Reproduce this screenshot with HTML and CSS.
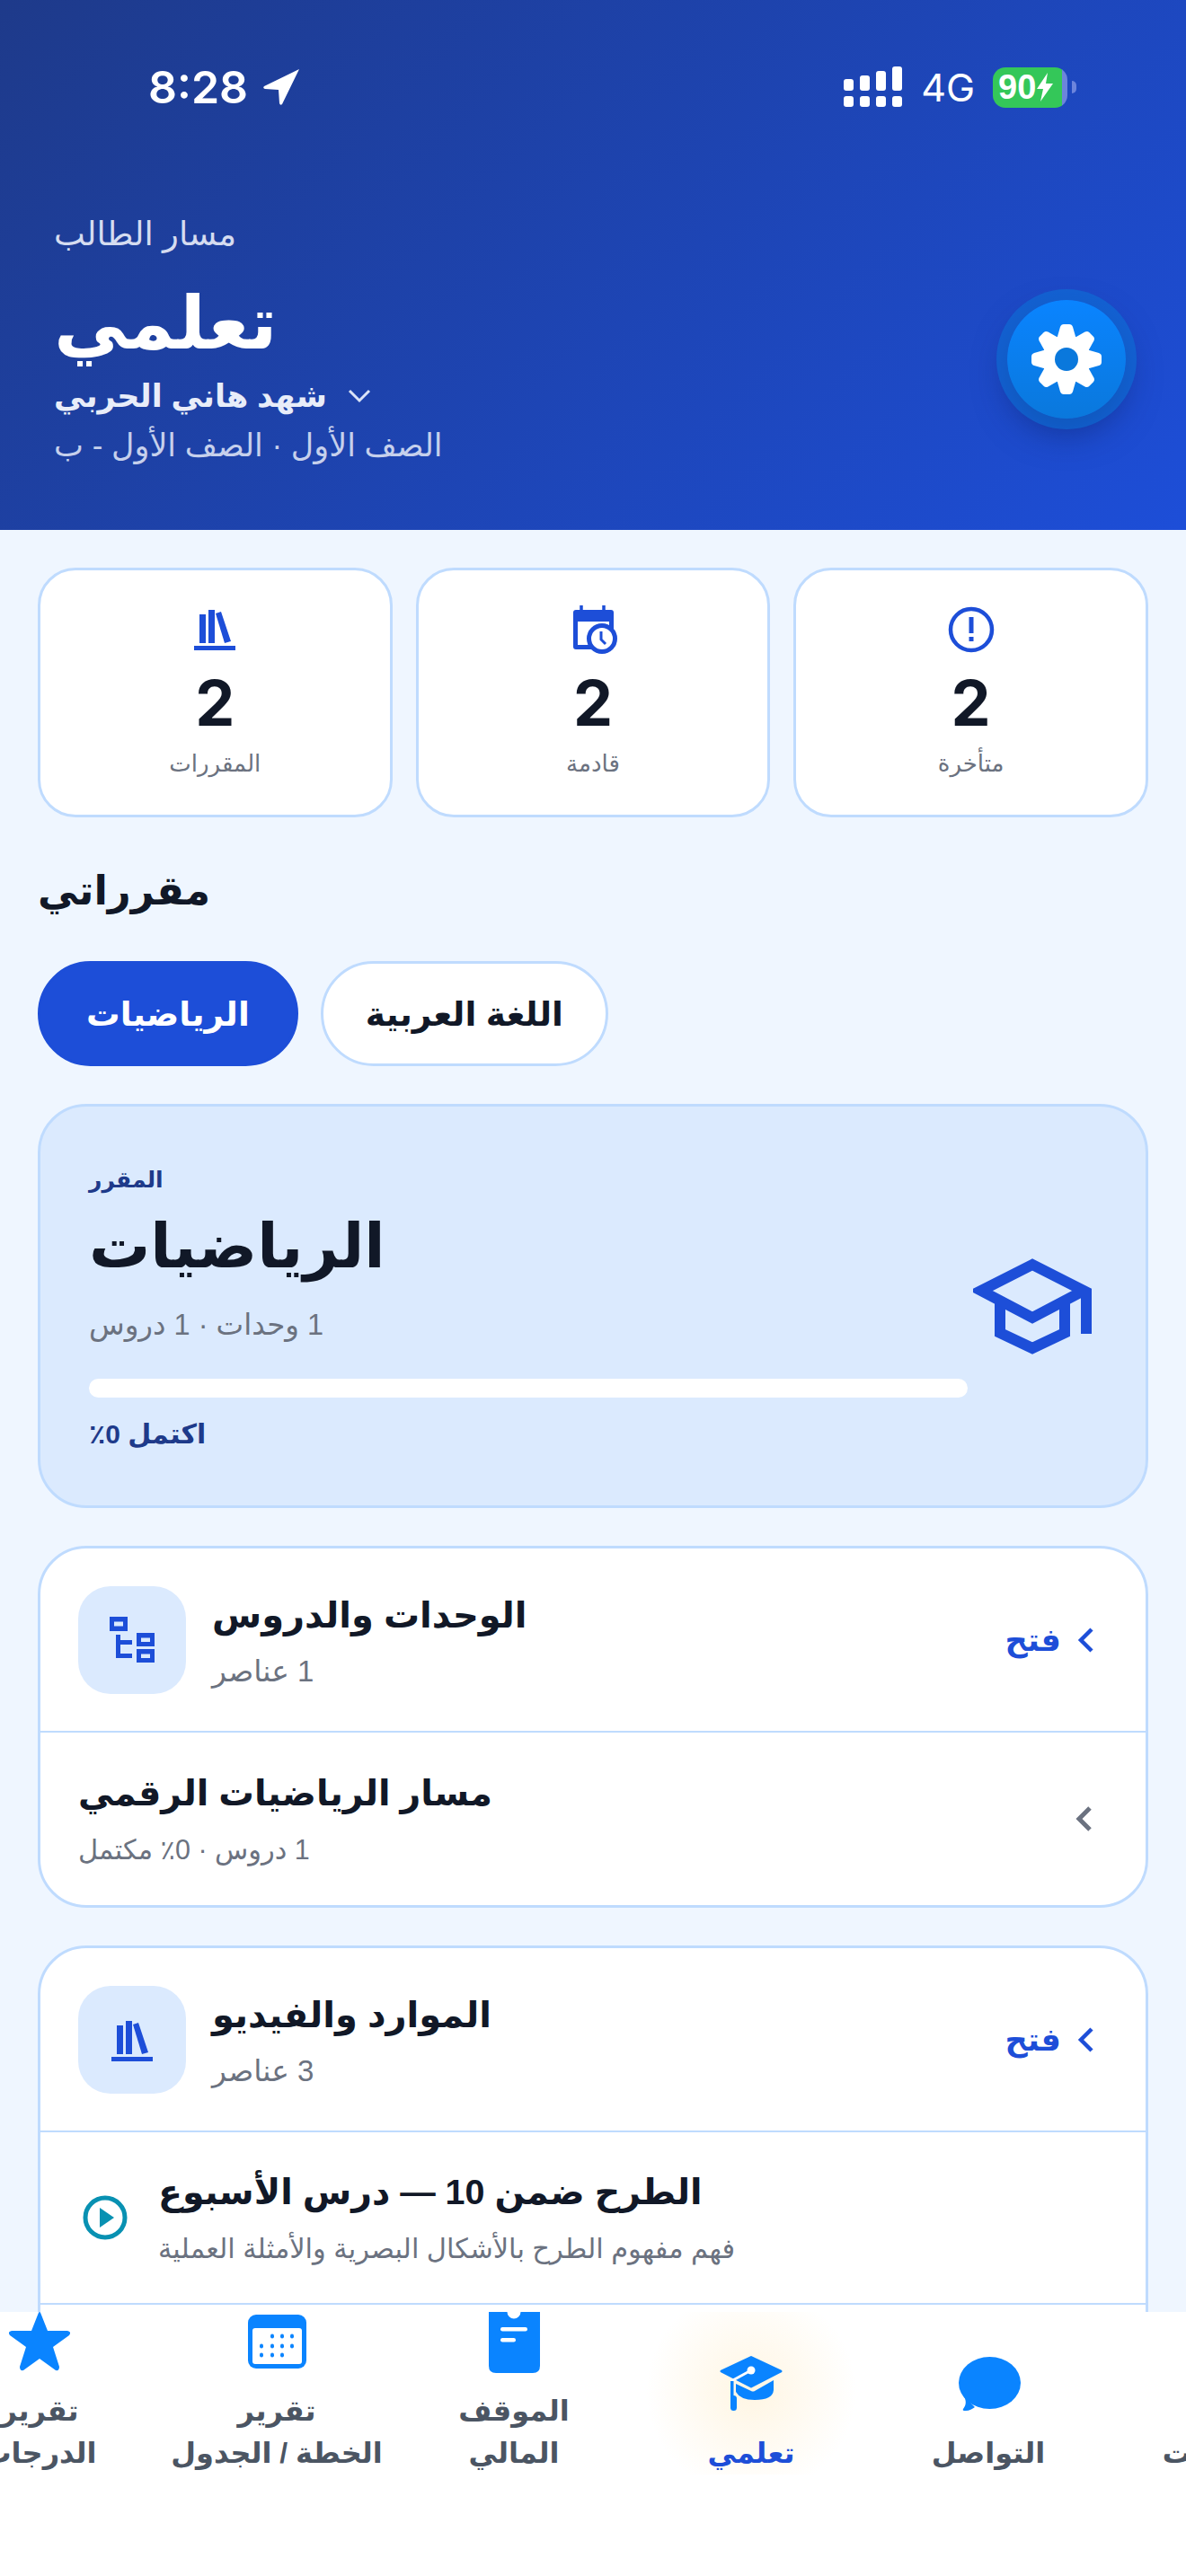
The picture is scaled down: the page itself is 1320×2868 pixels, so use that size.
FILE: index.html
```html
<!DOCTYPE html>
<html lang="ar">
<head>
    <meta charset="UTF-8">
    <meta name="viewport" content="width=device-width, initial-scale=1.0">
    <title>تعلمي</title>
    <link rel="stylesheet" href="styles.css">
</head>
<body>
    <div class="app">
        <header class="hero">
            <div class="status">
                <div class="status-left">
                    <span class="clock">8:28</span>
                    <svg class="loc" viewBox="0 0 42 42"><path d="M41 1 2 20q-2 2 1 3l15 1 1 15q1 3 3 1z" fill="#fff"/></svg>
                </div>
                <div class="status-right">
                    <svg class="signal" viewBox="0 0 66 46" fill="#fff">
                        <rect x="0" y="14" width="11" height="13" rx="3"/><rect x="18" y="10" width="11" height="17" rx="3"/><rect x="36" y="5" width="11" height="22" rx="3"/><rect x="54" y="0" width="11" height="27" rx="3"/>
                        <rect x="0" y="33" width="11" height="12" rx="3"/><rect x="18" y="33" width="11" height="12" rx="3"/><rect x="36" y="33" width="11" height="12" rx="3"/><rect x="54" y="33" width="11" height="12" rx="3"/>
                    </svg>
                    <span class="net">4G</span>
                    <div class="battery">
                        <div class="battery-body"><span>90</span><svg class="bolt" viewBox="0 0 20 32"><path d="M13 0 1 18h7l-3 14L19 12h-8z" fill="#fff"/></svg></div>
                        <i class="battery-cap"></i>
                    </div>
                </div>
            </div>
            <div class="hero-main">
                <div class="hero-text">
                    <div class="eyebrow" dir="rtl">مسار الطالب</div>
                    <h1 class="hero-title" dir="rtl">تعلمي</h1>
                    <div class="student">
                        <span dir="rtl">شهد هاني الحربي</span>
                        <svg class="caret" viewBox="0 0 26 16"><path d="M2 2l11 11L24 2" fill="none" stroke="#dbe4f7" stroke-width="3"/></svg>
                    </div>
                    <div class="class-line" dir="rtl">الصف الأول · الصف الأول - ب</div>
                </div>
                <button class="gear-btn">
                    <svg viewBox="-40 -40 80 80" class="gear">
                        <g fill="#fff">
                            <circle r="27"/>
                            <path d="M-11-22-7-36Q-6-39-3-39H3Q6-39 7-36L11-22z"/>
                            <path transform="rotate(45)" d="M-11-22-7-36Q-6-39-3-39H3Q6-39 7-36L11-22z"/>
                            <path transform="rotate(90)" d="M-11-22-7-36Q-6-39-3-39H3Q6-39 7-36L11-22z"/>
                            <path transform="rotate(135)" d="M-11-22-7-36Q-6-39-3-39H3Q6-39 7-36L11-22z"/>
                            <path transform="rotate(180)" d="M-11-22-7-36Q-6-39-3-39H3Q6-39 7-36L11-22z"/>
                            <path transform="rotate(225)" d="M-11-22-7-36Q-6-39-3-39H3Q6-39 7-36L11-22z"/>
                            <path transform="rotate(270)" d="M-11-22-7-36Q-6-39-3-39H3Q6-39 7-36L11-22z"/>
                            <path transform="rotate(315)" d="M-11-22-7-36Q-6-39-3-39H3Q6-39 7-36L11-22z"/>
                        </g>
                        <circle r="13" fill="#0a78dc"/>
                    </svg>
                </button>
            </div>
        </header>

        <main class="scroll">
            <section class="stats">
                <div class="stat">
                    <svg class="stat-icon" viewBox="0 0 56 56"><g fill="#1d4ed8"><rect x="11" y="12" width="7" height="32"/><rect x="21" y="7" width="7" height="37"/><path d="M29 11l6-2 11 33-7 2z"/><rect x="5" y="47" width="46" height="5"/></g></svg>
                    <div class="stat-num">2</div>
                    <div class="stat-label" dir="rtl">المقررات</div>
                </div>
                <div class="stat">
                    <svg class="stat-icon" viewBox="0 0 56 56"><path d="M15 2v6M40 2v6" fill="none" stroke="#1d4ed8" stroke-width="3.500"/><path d="M9 7h39a3 3 0 0 1 3 3v38a3 3 0 0 1-3 3H9a3 3 0 0 1-3-3V10a3 3 0 0 1 3-3zm2 13v26h35V20z" fill="#1d4ed8"/><circle cx="38" cy="39" r="14.500" fill="#fff" stroke="#1d4ed8" stroke-width="5"/><path d="M37 31v9l5 5" fill="none" stroke="#1d4ed8" stroke-width="3"/></svg>
                    <div class="stat-num">2</div>
                    <div class="stat-label" dir="rtl">قادمة</div>
                </div>
                <div class="stat">
                    <svg class="stat-icon" viewBox="0 0 56 56"><circle cx="28" cy="29" r="23" fill="none" stroke="#1d4ed8" stroke-width="4.500"/><rect x="25.500" y="15" width="5" height="18" fill="#1d4ed8"/><rect x="25.500" y="37" width="5" height="5" fill="#1d4ed8"/></svg>
                    <div class="stat-num">2</div>
                    <div class="stat-label" dir="rtl">متأخرة</div>
                </div>
            </section>

            <h2 class="section-title" dir="rtl">مقرراتي</h2>

            <div class="tabs">
                <div class="tab tab-active" dir="rtl">الرياضيات</div>
                <div class="tab" dir="rtl">اللغة العربية</div>
            </div>

            <section class="course">
                <div class="course-text">
                    <div class="course-eyebrow" dir="rtl">المقرر</div>
                    <div class="course-title" dir="rtl">الرياضيات</div>
                    <div class="course-sub" dir="rtl">1 وحدات · 1 دروس</div>
                    <div class="progress"></div>
                    <div class="course-done" dir="rtl">اكتمل 0٪</div>
                </div>
                <svg class="course-icon" viewBox="0 0 132 107" fill="none" stroke="#1d4ed8" stroke-width="12">
                    <path d="M66 7 9 36l57 30 57-30z"/>
                    <path d="M30 46v37l36 17 36-17V46"/>
                    <path d="M126 36v48"/>
                </svg>
            </section>

            <section class="panel">
                <div class="panel-head">
                    <div class="panel-icon">
                        <svg class="tree-icon" viewBox="0 0 50 51" fill="#1d4ed8" fill-rule="evenodd"><path d="M0 0h20v16H0zM5 5.500v5h10v-5z"/><path d="M30 18h20v15H30zM35 23.500v4.500h10v-4.500z"/><path d="M30 36h20v15H30zM35 41.500v4.500h10v-4.500z"/><path d="M7 20h5v6h13v5H12v10h13v5H7z"/></svg>
                    </div>
                    <div class="panel-text">
                        <div class="panel-title" dir="rtl">الوحدات والدروس</div>
                        <div class="panel-sub" dir="rtl">1 عناصر</div>
                    </div>
                    <div class="open-link">
                        <span dir="rtl">فتح</span>
                        <svg class="chev" viewBox="0 0 18 28"><path d="M16 2 4 14l12 12" fill="none" stroke="#1d4ed8" stroke-width="4.500"/></svg>
                    </div>
                </div>
                <div class="row">
                    <div class="row-text">
                        <div class="row-title" dir="rtl">مسار الرياضيات الرقمي</div>
                        <div class="row-sub" dir="rtl">1 دروس · 0٪ مكتمل</div>
                    </div>
                    <svg class="chev" viewBox="0 0 18 28"><path d="M16 2 4 14l12 12" fill="none" stroke="#6b7280" stroke-width="5"/></svg>
                </div>
            </section>

            <section class="panel">
                <div class="panel-head">
                    <div class="panel-icon">
                        <svg viewBox="0 0 56 56"><g fill="#1d4ed8"><rect x="11" y="12" width="7" height="32"/><rect x="21" y="7" width="7" height="37"/><path d="M29 11l6-2 11 33-7 2z"/><rect x="5" y="47" width="46" height="5"/></g></svg>
                    </div>
                    <div class="panel-text">
                        <div class="panel-title" dir="rtl">الموارد والفيديو</div>
                        <div class="panel-sub" dir="rtl">3 عناصر</div>
                    </div>
                    <div class="open-link">
                        <span dir="rtl">فتح</span>
                        <svg class="chev" viewBox="0 0 18 28"><path d="M16 2 4 14l12 12" fill="none" stroke="#1d4ed8" stroke-width="4.500"/></svg>
                    </div>
                </div>
                <div class="row row-video">
                    <svg class="play" viewBox="0 0 50 50"><circle cx="25" cy="25" r="22" fill="none" stroke="#0891b2" stroke-width="5"/><path d="M19 14l16 11-16 11z" fill="#0891b2"/></svg>
                    <div class="row-text">
                        <div class="row-title" dir="rtl">الطرح ضمن 10 — درس الأسبوع</div>
                        <div class="row-sub" dir="rtl">فهم مفهوم الطرح بالأشكال البصرية والأمثلة العملية</div>
                    </div>
                </div>
                <div class="row"></div>
            </section>
        </main>

        <nav class="tabbar">
            <div class="tabbar-track">
                <div class="nav-item">
                    <svg class="nav-icon" viewBox="0 0 72 72"><path d="M36 0q1 0 1.500 2L45 21h22q5 1 2 5L51 39l7 22q0 5-4 4L36 52 18 65q-4 1-4-4l7-22L3 26q-3-4 2-5h22l7.500-19Q35 0 36 0z" fill="#0a84ff"/></svg>
                    <div class="nav-label" dir="rtl">تقرير<br>الدرجات</div>
                </div>
                <div class="nav-item">
                    <svg class="nav-icon" viewBox="0 0 72 72"><rect x="4" y="3" width="65" height="60" rx="9" fill="#0a84ff"/><rect x="9" y="18" width="55" height="40" rx="3" fill="#fff"/><g fill="#0a84ff"><rect x="29" y="24.500" width="4" height="5" rx="2"/><rect x="40" y="24.500" width="4" height="5" rx="2"/><rect x="51" y="24.500" width="4" height="5" rx="2"/><rect x="17" y="35.500" width="4" height="5" rx="2"/><rect x="29" y="35.500" width="4" height="5" rx="2"/><rect x="40" y="35.500" width="4" height="5" rx="2"/><rect x="51" y="35.500" width="4" height="5" rx="2"/><rect x="17" y="45.500" width="4" height="5" rx="2"/><rect x="29" y="45.500" width="4" height="5" rx="2"/><rect x="40" y="45.500" width="4" height="5" rx="2"/></g></svg>
                    <div class="nav-label" dir="rtl">تقرير<br>الخطة / الجدول</div>
                </div>
                <div class="nav-item">
                    <svg class="nav-icon" viewBox="0 0 72 72"><path d="M8 0h20.500a7.500 7.500 0 0 0 15 0H65v60q0 8-8 8H16q-8 0-8-8z" fill="#0a84ff"/><rect x="21" y="17" width="30" height="4.500" rx="2.200" fill="#fff"/><rect x="21" y="29" width="17" height="4.500" rx="2.200" fill="#fff"/></svg>
                    <div class="nav-label" dir="rtl">الموقف<br>المالي</div>
                </div>
                <div class="nav-item nav-active">
                    <svg class="nav-icon" viewBox="0 0 72 72">
                        <path d="M36 3.500 69 19 36 36 3 19z" fill="#0a84ff" stroke="#0a84ff" stroke-width="3" stroke-linejoin="round"/>
                        <path d="M36 18 14 30" stroke="#fff" stroke-width="3"/>
                        <circle cx="36" cy="18" r="4.500" fill="#fff"/>
                        <path d="M19 33l17 8q2 1 4 0l21-12v11q-1 11-21 11-16 0-21-9z" fill="#0a84ff"/>
                        <rect x="13" y="30" width="3.500" height="20" fill="#0a84ff"/>
                        <rect x="13" y="46" width="7" height="17" rx="3.500" fill="#0a84ff"/>
                    </svg>
                    <div class="nav-label" dir="rtl">تعلمي</div>
                </div>
                <div class="nav-item">
                    <svg class="nav-icon" viewBox="0 0 72 72"><ellipse cx="37.500" cy="32" rx="34.500" ry="29" fill="#0a84ff"/><path d="M9 47c3 6 2 10-1 14-1 2 1 2 3 2 4 0 7-2 10-4z" fill="#0a84ff"/></svg>
                    <div class="nav-label" dir="rtl">التواصل</div>
                </div>
                <div class="nav-item">
                    <svg class="nav-icon" viewBox="0 0 72 72"></svg>
                    <div class="nav-label" dir="rtl">التنبيهات</div>
                </div>
            </div>
        </nav>
    </div>
</body>
</html>
```
FILE: styles.css
```css
* {
    margin: 0;
    padding: 0;
    box-sizing: border-box;
    font-family: "Liberation Sans", "DejaVu Sans", sans-serif;
}

body {
    background: #eff6ff;
    overflow: hidden;
}

.app {
    width: 1320px;
    height: 2868px;
    display: flex;
    flex-direction: column;
    overflow: hidden;
}

/* header */
.hero {
    height: 590px;
    flex: none;
    padding: 0 60px;
    background: linear-gradient(135deg, #1e3a8a, #1d4ed8);
    color: #fff;
}

.status {
    display: flex;
    justify-content: space-between;
    align-items: center;
    height: 194px;
    padding: 0 122px 0 165px;
    margin: 0 -60px;
}

.status-left,
.status-right {
    display: flex;
    align-items: center;
}

.clock {
    font-family: Inter, sans-serif;
    font-size: 50px;
    font-weight: 600;
}

.loc {
    width: 42px;
    height: 42px;
    margin-left: 16px;
}

.status-right {
    gap: 20px;
}

.signal {
    width: 66px;
    height: 46px;
}

.net {
    font-family: Inter, sans-serif;
    font-size: 43px;
    font-weight: 400;
}

.battery {
    display: flex;
    align-items: center;
    gap: 5px;
}

.battery-body {
    width: 83px;
    height: 45px;
    border-radius: 14px;
    display: flex;
    align-items: center;
    padding-left: 6px;
    background: linear-gradient(to right, #34c759 93%, #6c85dc 93%);
    font-family: Inter, sans-serif;
    font-size: 38px;
    font-weight: 700;
}

.bolt {
    width: 20px;
    height: 32px;
}

.battery-cap {
    width: 5px;
    height: 14px;
    border-radius: 0 5px 5px 0;
    background: #6c85dc;
}

.hero-main {
    display: flex;
    justify-content: space-between;
    align-items: center;
    margin-top: 48px;
}

.eyebrow {
    width: fit-content;
    font-size: 37px;
    line-height: 38px;
    color: #d5dcf0;
}

.hero-title {
    width: fit-content;
    font-size: 82px;
    line-height: 97px;
    font-weight: 700;
    margin-top: 31px;
}

.student {
    display: flex;
    align-items: center;
    gap: 23px;
    margin-top: 12px;
    font-size: 35px;
    line-height: 42px;
    font-weight: 700;
    color: #e8edf9;
}

.caret {
    width: 26px;
    height: 16px;
}

.class-line {
    width: fit-content;
    font-size: 35px;
    line-height: 37px;
    color: #c6d0ec;
    margin-top: 15px;
}

.gear-btn {
    width: 132px;
    height: 132px;
    margin: 44px 7px 0 0;
    border: none;
    border-radius: 50%;
    display: flex;
    align-items: center;
    justify-content: center;
    background: linear-gradient(#0a84ff, #0a78dc);
    box-shadow: 0 0 0 12px rgba(10, 120, 220, 0.5), 0 16px 36px rgba(15, 40, 120, 0.6);
}

.gear {
    width: 80px;
    height: 80px;
}

/* scroll area */
.scroll {
    flex: 1;
    min-height: 0;
    overflow: hidden;
    padding: 42px 42px 0;
}

.stats {
    display: grid;
    grid-template-columns: repeat(3, 1fr);
    gap: 26px;
}

.stat {
    height: 278px;
    background: #fff;
    border: 3px solid #bfdbfe;
    border-radius: 42px;
    display: flex;
    flex-direction: column;
    align-items: center;
    padding-top: 37px;
}

.stat-icon {
    width: 56px;
    height: 56px;
}

.stat-num {
    font-family: Inter, sans-serif;
    font-size: 70px;
    line-height: 88px;
    font-weight: 700;
    color: #111827;
    margin-top: 11px;
}

.stat-label {
    font-size: 26px;
    line-height: 36px;
    color: #6b7280;
    margin-top: 5px;
}

.section-title {
    width: fit-content;
    font-size: 45px;
    line-height: 62px;
    font-weight: 700;
    color: #111827;
    margin-top: 51px;
}

.tabs {
    display: flex;
    gap: 25px;
    margin-top: 47px;
}

.tab {
    height: 117px;
    padding: 0 47px;
    display: flex;
    align-items: center;
    background: #fff;
    border: 3px solid #bfdbfe;
    border-radius: 59px;
    font-size: 37.500px;
    font-weight: 700;
    color: #111827;
}

.tab-active {
    padding: 0 51px;
    background: #1d4ed8;
    border-color: #1d4ed8;
    color: #fff;
}

.course {
    height: 450px;
    margin-top: 42px;
    padding: 0 57px 0 54px;
    display: flex;
    align-items: center;
    gap: 6px;
    background: #dbeafe;
    border: 3px solid #bfdbfe;
    border-radius: 54px;
}

.course-text {
    width: 978px;
    flex: none;
}

.course-eyebrow {
    width: fit-content;
    font-size: 25px;
    line-height: 38px;
    font-weight: 700;
    color: #1e3a8a;
}

.course-title {
    width: fit-content;
    font-size: 68px;
    line-height: 78px;
    font-weight: 700;
    color: #111827;
    margin-top: 16px;
}

.course-sub {
    width: fit-content;
    font-size: 32.500px;
    line-height: 38px;
    color: #6b7280;
    margin-top: 30px;
}

.progress {
    height: 21px;
    background: #fff;
    border-radius: 11px;
    margin-top: 41px;
}

.course-done {
    width: fit-content;
    font-size: 30px;
    line-height: 36px;
    font-weight: 700;
    color: #1e3a8a;
    margin-top: 23px;
}

.course-icon {
    width: 132px;
    height: 107px;
    flex: none;
}

.panel {
    margin-top: 42px;
    background: #fff;
    border: 3px solid #bfdbfe;
    border-radius: 54px;
    overflow: hidden;
}

.panel-head {
    height: 205px;
    padding: 0 58px 0 42px;
    display: flex;
    align-items: center;
    gap: 29px;
    border-bottom: 2px solid #bfdbfe;
}

.panel-icon {
    width: 120px;
    height: 120px;
    flex: none;
    background: #dbeafe;
    border-radius: 36px;
    display: flex;
    align-items: center;
    justify-content: center;
}

.panel-icon svg {
    width: 56px;
    height: 56px;
}

.panel-icon .tree-icon {
    width: 50px;
    height: 51px;
}

.panel-text {
    flex: 1;
}

.panel-title {
    width: fit-content;
    font-size: 40px;
    line-height: 52px;
    font-weight: 700;
    color: #111827;
}

.panel-sub {
    width: fit-content;
    font-size: 33px;
    line-height: 38px;
    color: #6b7280;
    margin-top: 18px;
}

.open-link {
    display: flex;
    align-items: center;
    gap: 18px;
    font-size: 35px;
    font-weight: 700;
    color: #1d4ed8;
}

.chev {
    width: 18px;
    height: 28px;
    flex: none;
}

.row {
    height: 192px;
    padding: 0 60px 0 42px;
    display: flex;
    align-items: center;
    justify-content: space-between;
    border-bottom: 2px solid #bfdbfe;
}

.row:last-child {
    border-bottom: none;
}

.row-video {
    justify-content: flex-start;
    gap: 34px;
    padding-left: 47px;
}

.row-title {
    width: fit-content;
    font-size: 39.500px;
    line-height: 46px;
    font-weight: 700;
    color: #111827;
}

.row-sub {
    width: fit-content;
    font-size: 30.500px;
    line-height: 37px;
    color: #6b7280;
    margin-top: 22px;
}

.play {
    width: 50px;
    height: 50px;
    flex: none;
}

/* bottom tab bar */
.tabbar {
    height: 294px;
    flex: none;
    background: #fff;
    overflow: hidden;
}

.tabbar-track {
    display: flex;
    height: 181px;
    margin-left: -88px;
}

.nav-item {
    width: 264px;
    flex: none;
    display: flex;
    flex-direction: column;
    align-items: center;
    justify-content: flex-end;
    gap: 15px;
}

.nav-icon {
    width: 72px;
    height: 72px;
}

.nav-label {
    text-align: center;
    font-size: 32px;
    line-height: 47px;
    font-weight: 700;
    color: #4b5563;
}

.nav-active {
    background: radial-gradient(circle 117px at 50% 88px, rgba(255, 196, 80, 0.16), rgba(255, 196, 80, 0));
}

.nav-active .nav-label {
    color: #1d4ed8;
}
```
